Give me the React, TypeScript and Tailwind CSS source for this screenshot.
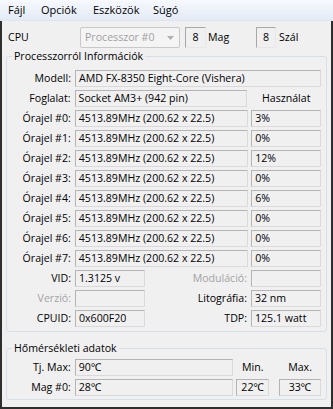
const font = { fontFamily: '"Open Sans", "Noto Sans", sans-serif' }

const clocks = ["3%", "0%", "12%", "0%", "6%", "0%", "0%", "0%"]

function Field({ children, className = "" }: { children?: React.ReactNode; className?: string }) {
  return (
    <div
      className={
        "h-[17px] flex items-center pl-[3px] border border-t-[#b4b4b4] border-l-[#b4b4b4] border-r-[#dadada] border-b-[#dadada] bg-[#f0f0f0] text-black whitespace-nowrap overflow-hidden " +
        className
      }
    >
      {children}
    </div>
  )
}

function Label({ children, gray }: { children: React.ReactNode; gray?: boolean }) {
  return (
    <div className={"w-[64px] text-right whitespace-nowrap " + (gray ? "text-[#a3a3a3]" : "text-black")}>
      {children}
    </div>
  )
}

function Group({ title, children, className = "" }: { title: string; children: React.ReactNode; className?: string }) {
  return (
    <div className={"relative border border-[#d5dfe5] rounded-[3px] pr-[5px] flex flex-col gap-[3px] " + className}>
      <div className="absolute -top-[9px] left-[5px] px-[2px] bg-[#f0f0f0] text-black leading-[16px]">{title}</div>
      {children}
    </div>
  )
}

export default function App() {
  return (
    <div style={font} className="w-[333px] h-[409px] bg-[#f0f0f0] flex flex-col text-[10.6px] text-black">
      {/* menü */}
      <div className="h-[21px] flex items-center pl-[8px] text-[11px] bg-gradient-to-b from-[#f6f9fd] to-[#e4ebf5] border-b border-[#dfe6ef]">
        <span className="w-[33px]">Fájl</span>
        <span className="w-[52px]">Opciók</span>
        <span className="w-[60px]">Eszközök</span>
        <span>Súgó</span>
      </div>

      <div className="flex-1 flex flex-col border-l-2 border-r-2 border-b-2 border-[#2e2e2e] px-[4px]">
        {/* CPU sor */}
        <div className="mt-[6px] h-[21px] flex items-center pl-[2px]">
          <span className="w-[72px]">CPU</span>
          <div className="w-[100px] h-[21px] flex items-center justify-between pl-[4px] pr-[5px] border border-[#c9c9c9] rounded-[2px] bg-[#f4f4f4] text-[#a0a0a0]">
            <span>Processzor #0</span>
            <svg width="7" height="4" viewBox="0 0 7 4">
              <path d="M0 0 L7 0 L3.5 4 Z" fill="#b0b0b0" />
            </svg>
          </div>
          <div className="ml-[5px] w-[21px] h-[21px] flex items-center justify-center border border-t-[#a8a8a8] border-l-[#a8a8a8] border-r-[#e8e8e8] border-b-[#e8e8e8]">
            8
          </div>
          <span className="ml-[2px] w-[48px]">Mag</span>
          <div className="w-[20px] h-[21px] flex items-center justify-center border border-t-[#a8a8a8] border-l-[#a8a8a8] border-r-[#e8e8e8] border-b-[#e8e8e8]">
            8
          </div>
          <span className="ml-[3px]">Szál</span>
        </div>

        {/* processzor infó */}
        <Group title="Processzorról Információk" className="mt-[8px] pt-[13px] pb-[4px]">
          <div className="flex items-center gap-[4px]">
            <Label>Modell:</Label>
            <Field className="w-[246px]">AMD FX-8350 Eight-Core (Vishera)</Field>
          </div>
          <div className="flex items-center gap-[4px]">
            <Label>Foglalat:</Label>
            <Field className="w-[174px]">Socket AM3+ (942 pin)</Field>
            <div className="w-[70px] text-center">Használat</div>
          </div>
          {clocks.map((p, i) => (
            <div key={i} className="flex items-center gap-[4px]">
              <Label>Órajel #{i}:</Label>
              <Field className="w-[174px]">4513.89MHz (200.62 x 22.5)</Field>
              <Field className="w-[70px] -ml-[1px]">{p}</Field>
            </div>
          ))}
          <div className="flex items-center gap-[4px]">
            <Label>VID:</Label>
            <Field className="w-[70px]">1.3125 v</Field>
            <div className="flex-1 text-right text-[#a3a3a3]">Moduláció:</div>
            <Field className="w-[70px]" />
          </div>
          <div className="flex items-center gap-[4px]">
            <Label gray>Verzió:</Label>
            <Field className="w-[70px]" />
            <div className="flex-1 text-right">Litográfia:</div>
            <Field className="w-[70px]">32 nm</Field>
          </div>
          <div className="flex items-center gap-[4px]">
            <Label>CPUID:</Label>
            <Field className="w-[70px]">0x600F20</Field>
            <div className="flex-1 text-right">TDP:</div>
            <Field className="w-[70px]">125.1 watt</Field>
          </div>
        </Group>

        {/* hőmérséklet */}
        <Group title="Hőmérsékleti adatok" className="mt-[16px] pt-[10px] pb-[3px]">
          <div className="flex items-center gap-[4px]">
            <Label>Tj. Max:</Label>
            <Field className="w-[159px]">90℃</Field>
            <div className="w-[33px] -ml-[1px] text-center">Min.</div>
            <div className="ml-[6px] w-[42px] text-center">Max.</div>
          </div>
          <div className="flex items-center gap-[4px]">
            <Label>Mag #0:</Label>
            <Field className="w-[159px]">28℃</Field>
            <Field className="w-[33px] -ml-[1px] justify-center !pl-0">22℃</Field>
            <Field className="ml-[6px] w-[42px] justify-center !pl-0">33℃</Field>
          </div>
        </Group>
      </div>
    </div>
  )
}
